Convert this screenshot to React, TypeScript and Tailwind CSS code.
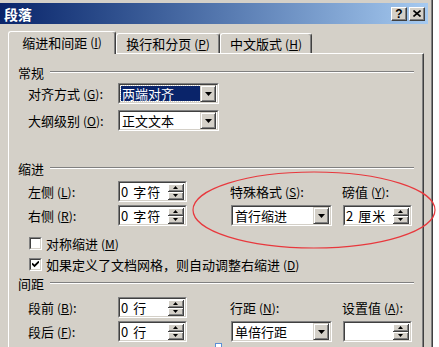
import type { ReactNode } from 'react';

const FONT = "font-['Noto_Sans_CJK_SC',sans-serif]";

function Key({ k }: { k: string }) {
  return (
    <span className="ml-[3px] text-[12px]">
      (<span className="underline underline-offset-1">{k}</span>)
    </span>
  );
}

function Groove() {
  return <div className="h-[2px] flex-1 border-t border-t-[#808080] border-b border-b-white" />;
}

function GroupHeader({ title }: { title: string }) {
  return (
    <div className="flex h-[18px] items-center pl-[9px] pr-[9px]">
      <span className="mr-[6px]">{title}</span>
      <Groove />
    </div>
  );
}

function Sunken({ className, children }: { className: string; children?: ReactNode }) {
  return (
    <div
      className={`h-[21px] border border-t-[#808080] border-l-[#808080] border-b-white border-r-white ${className}`}
    >
      <div className="flex h-full items-center border border-t-[#404040] border-l-[#404040] border-b-[#d4d0c8] border-r-[#d4d0c8] bg-white">
        {children}
      </div>
    </div>
  );
}

function DropButton() {
  return (
    <div className="flex h-[17px] w-[16px] items-center justify-center border border-t-[#d4d0c8] border-l-[#d4d0c8] border-b-[#404040] border-r-[#404040] bg-[#d4d0c8] shadow-[inset_1px_1px_#fff,inset_-1px_-1px_#808080]">
      <svg width="7" height="4" viewBox="0 0 7 4">
        <path d="M0 0h7L3.5 4z" fill="#000" />
      </svg>
    </div>
  );
}

function SpinHalf({ up }: { up: boolean }) {
  return (
    <div className="flex h-[8px] w-[16px] items-center justify-center border-b border-r border-b-[#404040] border-r-[#404040] bg-[#d4d0c8] shadow-[inset_1px_1px_#fff,inset_-1px_-1px_#808080]">
      <svg width="5" height="3" viewBox="0 0 5 3">
        <path d={up ? 'M0 3h5L2.5 0z' : 'M0 0h5L2.5 3z'} fill="#000" />
      </svg>
    </div>
  );
}

function Select({ value, selected }: { value: string; selected?: boolean }) {
  return (
    <Sunken className="w-[101px]">
      <div className="flex flex-1 items-center pl-px">
        {selected ? (
          <span className="flex h-[15px] flex-1 items-center bg-[#0a246a] pl-px text-white outline-1 outline-dotted outline-[#d4d0c8]">
            {value}
          </span>
        ) : (
          <span className="pl-px">{value}</span>
        )}
      </div>
      <div className="mr-px">
        <DropButton />
      </div>
    </Sunken>
  );
}

function Spinner({ value }: { value: string }) {
  return (
    <Sunken className="w-[69px]">
      <span className="flex-1 pl-px tracking-[1px] whitespace-pre">{value}</span>
      <div className="mr-px flex flex-col">
        <SpinHalf up />
        <SpinHalf up={false} />
      </div>
    </Sunken>
  );
}

function Label({ text, k }: { text: string; k: string }) {
  return (
    <div className="flex w-[90px] shrink-0 items-center whitespace-nowrap">
      {text}
      <Key k={k} />:
    </div>
  );
}

function Checkbox({ checked, children }: { checked?: boolean; children: ReactNode }) {
  return (
    <div className="flex h-[18px] items-center pl-[20px]">
      <div className="h-[13px] w-[13px] border border-t-[#808080] border-l-[#808080] border-b-white border-r-white">
        <div className="flex h-full w-full items-center justify-center border border-t-[#404040] border-l-[#404040] border-b-[#d4d0c8] border-r-[#d4d0c8] bg-white">
          {checked && (
            <svg width="7" height="7" viewBox="0 0 7 7">
              <path d="M0 2.5l2.5 2.5L7 0.5" fill="none" stroke="#000" strokeWidth="1.8" />
            </svg>
          )}
        </div>
      </div>
      <span className="ml-[4px] whitespace-nowrap">{children}</span>
    </div>
  );
}

function Tab({ active, className, children }: { active?: boolean; className: string; children: ReactNode }) {
  return (
    <div
      className={`flex items-center justify-center rounded-t-[3px] border-l border-t border-l-white border-t-white border-r border-r-[#404040] bg-[#d4d0c8] shadow-[inset_-1px_0_#808080] ${
        active ? 'relative z-10 h-[23px] pb-[2px]' : 'mb-px h-[20px]'
      } ${className}`}
    >
      {children}
    </div>
  );
}

export default function App() {
  return (
    <div className={`relative flex h-[347px] w-[439px] overflow-hidden bg-white text-[13px] leading-none text-black ${FONT}`}>
      <div className="flex w-[433px] shrink-0 flex-col border-r border-r-[#404040] bg-[#d4d0c8] pt-[3px] shadow-[inset_-1px_0_#808080]">
        {/* title bar */}
        <div className="mr-[4px] flex h-[21px] shrink-0 items-center bg-gradient-to-r from-[#0a246a] to-[#a6caf0] pl-[4px] pr-[3px]">
          <span className="flex-1 text-[14px] font-bold text-white">段落</span>
          <div className="flex gap-[2px]">
            <div className="flex h-[14px] w-[16px] items-center justify-center border border-t-white border-l-white border-b-[#404040] border-r-[#404040] bg-[#d4d0c8] text-[12px] font-bold font-['Liberation_Sans',sans-serif] shadow-[inset_-1px_-1px_#808080]">
              ?
            </div>
            <div className="flex h-[14px] w-[16px] items-center justify-center border border-t-white border-l-white border-b-[#404040] border-r-[#404040] bg-[#d4d0c8] shadow-[inset_-1px_-1px_#808080]">
              <svg width="8" height="7" viewBox="0 0 8 7">
                <path d="M0.5 0.5l7 6M7.5 0.5l-7 6" stroke="#000" strokeWidth="1.6" />
              </svg>
            </div>
          </div>
        </div>

        {/* tabs */}
        <div className="ml-[8px] mt-[5px] flex h-[25px] shrink-0 items-end">
          <Tab active className="w-[108px]">
            缩进和间距<Key k="I" />
          </Tab>
          <Tab className="w-[104px]">
            换行和分页<Key k="P" />
          </Tab>
          <Tab className="w-[92px]">
            中文版式<Key k="H" />
          </Tab>
        </div>

        {/* panel */}
        <div className="-mt-px ml-[8px] flex w-[416px] flex-1 flex-col border-l border-t border-l-white border-t-white border-r border-r-[#404040] pt-[9px] shadow-[inset_-1px_0_#808080]">
          <GroupHeader title="常规" />
          <div className="mt-[2px] flex h-[21px] items-center pl-[19px]">
            <Label text="对齐方式" k="G" />
            <Select value="两端对齐" selected />
          </div>
          <div className="mt-[6px] flex h-[21px] items-center pl-[19px]">
            <Label text="大纲级别" k="O" />
            <Select value="正文文本" />
          </div>

          <div className="mt-[28px]">
            <GroupHeader title="缩进" />
          </div>
          <div className="mt-[4px] flex h-[21px] items-center pl-[19px]">
            <Label text="左侧" k="L" />
            <Spinner value="0 字符" />
            <div className="ml-[43px] flex w-[112px] items-center whitespace-nowrap">
              特殊格式<Key k="S" />:
            </div>
            <div className="flex items-center whitespace-nowrap">
              磅值<Key k="Y" />:
            </div>
          </div>
          <div className="mt-[3px] flex h-[21px] items-center pl-[19px]">
            <Label text="右侧" k="R" />
            <Spinner value="0 字符" />
            <div className="ml-[44px]">
              <Select value="首行缩进" />
            </div>
            <div className="ml-[11px]">
              <Spinner value="2 厘米" />
            </div>
          </div>
          <div className="mt-[8px]">
            <Checkbox>
              对称缩进<Key k="M" />
            </Checkbox>
          </div>
          <div className="mt-[3px]">
            <Checkbox checked>
              如果定义了文档网格，则自动调整右缩进<Key k="D" />
            </Checkbox>
          </div>

          <div className="mt-px">
            <GroupHeader title="间距" />
          </div>
          <div className="mt-[5px] flex h-[21px] items-center pl-[19px]">
            <Label text="段前" k="B" />
            <Spinner value="0 行" />
            <div className="ml-[43px] flex w-[112px] items-center whitespace-nowrap">
              行距<Key k="N" />:
            </div>
            <div className="flex items-center whitespace-nowrap">
              设置值<Key k="A" />:
            </div>
          </div>
          <div className="mt-[3px] flex h-[21px] items-center pl-[19px]">
            <Label text="段后" k="F" />
            <Spinner value="0 行" />
            <div className="ml-[44px]">
              <Select value="单倍行距" />
            </div>
            <div className="ml-[11px]">
              <Spinner value="" />
            </div>
          </div>
        </div>
      </div>

      {/* red annotation ellipse drawn over the screenshot */}
      <svg className="pointer-events-none absolute left-0 top-0" width="439" height="347">
        <ellipse cx="314" cy="210" rx="121" ry="38" fill="none" stroke="#e8383d" strokeWidth="1.2" />
        <rect x="215.5" y="343.5" width="6" height="6" fill="#fff" stroke="#5b8fd6" />
      </svg>
    </div>
  );
}
